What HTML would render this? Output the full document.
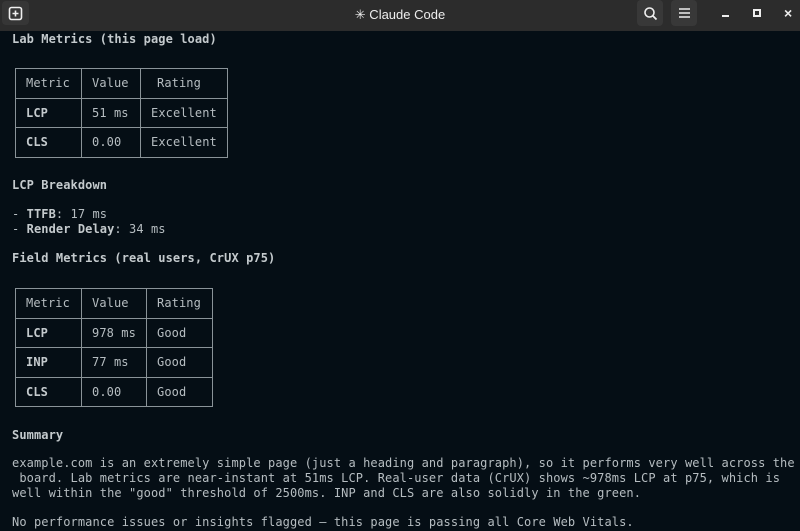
<!DOCTYPE html>
<html><head><style>
body{margin:0;width:800px;height:531px;background:#050e15;overflow:hidden;font-family:"DejaVu Sans Mono","Liberation Mono",monospace;font-size:12px;letter-spacing:0.09px;color:#b6bdc1;position:relative}
.bar{position:absolute;left:0;top:0;width:800px;height:31px;background:#2c2c2c;letter-spacing:0}
.t{position:absolute;left:12px;white-space:pre;line-height:15px}
b{font-weight:bold;color:#c4cacd}
table{position:absolute;border-collapse:collapse}
td{border:1px solid #8a9398;padding:0;height:28.5px;text-align:left;padding-left:10px;white-space:pre}
.btn{position:absolute;top:0;width:26px;height:26px;background:#383838;border-radius:4px}
</style></head><body>
<div class="bar">
 <div class="btn" style="left:2px;top:1px;width:27px;height:24px;background:#363636"></div>
 <svg style="position:absolute;left:8px;top:6px" width="15" height="15" viewBox="0 0 15 15"><rect x="1.5" y="1.5" width="12" height="12" rx="2" fill="none" stroke="#eee" stroke-width="1.6"/><path d="M7.5 4.5v6M4.5 7.5h6" stroke="#eee" stroke-width="1.6"/></svg>
 <div style="position:absolute;left:0;width:800px;top:7px;text-align:center;font-family:'Liberation Sans',sans-serif;font-size:13px;color:#eee">✳ Claude Code</div>
 <div class="btn" style="left:637px;top:0"></div>
 <svg style="position:absolute;left:643px;top:6px" width="15" height="15" viewBox="0 0 15 15"><circle cx="6.5" cy="6.5" r="4.5" fill="none" stroke="#eee" stroke-width="1.6"/><path d="M10 10l3.5 3.5" stroke="#eee" stroke-width="1.8"/></svg>
 <div class="btn" style="left:671px;top:0"></div>
 <svg style="position:absolute;left:678px;top:7px" width="13" height="12" viewBox="0 0 13 12"><path d="M1 2h11M1 6h11M1 10h11" stroke="#eee" stroke-width="1.6"/></svg>
 <div style="position:absolute;left:722px;top:15px;width:7px;height:2px;background:#eee"></div>
 <div style="position:absolute;left:753px;top:9px;width:4px;height:4px;border:2px solid #eee"></div>
 <div style="position:absolute;left:784px;top:5px;color:#eee;font-family:'Liberation Sans',sans-serif;font-size:14px;font-weight:bold">×</div>
</div>
<div class="t" style="top:32px"><b>Lab Metrics (this page load)</b></div>
<table style="left:15px;top:68px">
<tr><td style="width:55px">Metric</td><td style="width:48px">Value</td><td style="width:70px;padding-left:16px">Rating</td></tr>
<tr><td><b>LCP</b></td><td>51 ms</td><td>Excellent</td></tr>
<tr><td><b>CLS</b></td><td>0.00</td><td>Excellent</td></tr>
</table>
<div class="t" style="top:178px"><b>LCP Breakdown</b></div>
<div class="t" style="top:207px">- <b>TTFB</b>: 17 ms</div>
<div class="t" style="top:222px">- <b>Render Delay</b>: 34 ms</div>
<div class="t" style="top:251px"><b>Field Metrics (real users, CrUX p75)</b></div>
<table style="left:15px;top:288px">
<tr><td style="width:55px">Metric</td><td style="width:54px">Value</td><td style="width:55px">Rating</td></tr>
<tr><td><b>LCP</b></td><td>978 ms</td><td>Good</td></tr>
<tr><td><b>INP</b></td><td>77 ms</td><td>Good</td></tr>
<tr><td><b>CLS</b></td><td>0.00</td><td>Good</td></tr>
</table>
<div class="t" style="top:428px"><b>Summary</b></div>
<div class="t" style="top:456px">example.com is an extremely simple page (just a heading and paragraph), so it performs very well across the
 board. Lab metrics are near-instant at 51ms LCP. Real-user data (CrUX) shows ~978ms LCP at p75, which is
well within the "good" threshold of 2500ms. INP and CLS are also solidly in the green.</div>
<div class="t" style="top:515px">No performance issues or insights flagged — this page is passing all Core Web Vitals.</div>
</body></html>
